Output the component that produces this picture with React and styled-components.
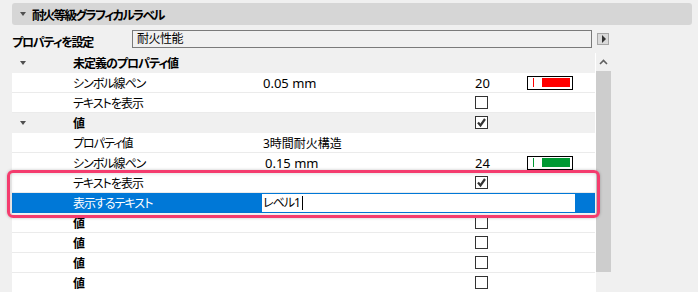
import React from 'react';
import styled, { createGlobalStyle } from 'styled-components';

const GlobalStyle = createGlobalStyle`
  html, body {
    margin: 0;
    padding: 0;
    background: #f0f0f0;
    overflow: hidden;
  }
  body {
    font-family: "Noto Sans", "Noto Sans CJK JP", sans-serif;
    font-size: 12px;
    color: #000;
    font-feature-settings: "palt";
  }
`;

const Page = styled.div`
  width: 698px;
  height: 292px;
  padding: 3px 6px 0 12px;
  box-sizing: border-box;
`;

const HeaderBar = styled.div`
  height: 22px;
  display: flex;
  align-items: center;
  background: #d6d6d6;
  border-radius: 3px;
  padding-left: 8px;
  gap: 6px;
  font-weight: bold;
  font-size: 12.5px;
  letter-spacing: -1.7px;
`;

const Caret = styled.span`
  width: 0;
  height: 0;
  border-left: 3px solid transparent;
  border-right: 3px solid transparent;
  border-top: 4px solid #505050;
  flex: none;
`;

const PropRow = styled.div`
  height: 28px;
  display: flex;
  align-items: flex-start;
`;

const PropLabel = styled.div`
  width: 120px;
  padding-top: 8px;
  font-weight: bold;
  letter-spacing: -1.2px;
`;

const PropInput = styled.div`
  margin-top: 5px;
  width: 460px;
  height: 18px;
  box-sizing: border-box;
  border: 1px solid #7a7a7a;
  background: #f0f0f0;
  padding-left: 4px;
  line-height: 16px;
  letter-spacing: -0.5px;
`;

const MenuButton = styled.div`
  margin: 8px 0 0 5px;
  width: 12px;
  height: 12px;
  box-sizing: border-box;
  border: 1px solid #a6a6a6;
  background: #dadada;
  display: flex;
  align-items: center;
  justify-content: center;
  &::after {
    content: '';
    border-top: 4px solid transparent;
    border-bottom: 4px solid transparent;
    border-left: 4px solid #333;
    margin-left: 1px;
  }
`;

const TableArea = styled.div`
  display: flex;
  height: 239px;
`;

const Table = styled.div`
  position: relative;
  width: 583px;
`;

const Row = styled.div`
  height: 20px;
  box-sizing: border-box;
  display: grid;
  grid-template-columns: 61px 190px 212px 52px 1fr;
  align-items: center;
  background: ${p => (p.$selected ? '#0078d7' : p.$group ? '#f0f0f0' : '#fff')};
  color: ${p => (p.$selected ? '#fff' : '#000')};
  border-bottom: 1px solid ${p => (p.$group || p.$selected ? 'transparent' : '#ebebeb')};
`;

const CaretCell = styled.div`
  padding-left: 8px;
  display: flex;
  align-items: center;
`;

const Label = styled.div`
  font-weight: ${p => (p.$bold ? 'bold' : 'normal')};
  letter-spacing: -1px;
  white-space: nowrap;
`;

const Value = styled.div`
  white-space: nowrap;
  font-size: ${p => (p.$latin ? '13px' : '12px')};
  padding-left: ${p => p.$shift || 0}px;
`;

const EditBox = styled.div`
  margin-left: -1px;
  width: 313px;
  height: 18px;
  box-sizing: border-box;
  background: #fff;
  color: #000;
  padding-left: 1px;
  line-height: 18px;
  letter-spacing: -1px;
  display: flex;
  align-items: center;
  &::after {
    content: '';
    width: 1px;
    height: 14px;
    background: #000;
    margin-left: 2px;
  }
`;

const Checkbox = styled.div`
  width: 13px;
  height: 13px;
  box-sizing: border-box;
  border: 1px solid #333;
  background: #fff;
  display: flex;
  align-items: center;
  justify-content: center;
`;

const PenNumber = styled.span`
  font-size: 13px;
`;

const Swatch = styled.div`
  width: 46px;
  height: 14px;
  box-sizing: border-box;
  border: 1px solid #000;
  background: #fff;
  display: flex;
  align-items: center;
  padding: 0 2px 0 5px;
  gap: 8px;
`;

const SwatchTick = styled.span`
  width: 1px;
  height: 9px;
  background: ${p => p.$color};
`;

const SwatchBar = styled.span`
  flex: 1;
  height: 9px;
  background: ${p => p.$color};
`;

const Highlight = styled.div`
  position: absolute;
  left: -5px;
  top: 117px;
  width: 593px;
  height: 48px;
  box-sizing: border-box;
  border: 3px solid #f43c6e;
  border-radius: 6px;
  box-shadow: 0 0 3px rgba(0, 0, 0, 0.25), inset 0 0 4px rgba(0, 0, 0, 0.18);
  pointer-events: none;
`;

const Scrollbar = styled.div`
  width: 16px;
  box-sizing: border-box;
  border-left: 1px solid #fff;
  display: flex;
  flex-direction: column;
`;

const ScrollArrow = styled.div`
  height: 18px;
  display: flex;
  align-items: center;
  justify-content: center;
`;

const ScrollThumb = styled.div`
  height: 201px;
  background: #cdcdcd;
`;

const Check = () => (
  <svg width="11" height="11" viewBox="0 0 11 11">
    <path d="M2 5.5 L4.5 8.5 L9 2" fill="none" stroke="#333" strokeWidth="2.2" />
  </svg>
);

const rows = [
  { group: true, label: '未定義のプロパティ値' },
  { label: 'シンボル線ペン', value: '0.05 mm', latin: true, pen: '20', color: '#ff0000' },
  { label: 'テキストを表示', check: false },
  { group: true, label: '値', check: true },
  { label: 'プロパティ値', value: '3時間耐火構造' },
  { label: 'シンボル線ペン', value: '0.15 mm', latin: true, shift: 2, pen: '24', color: '#009933' },
  { label: 'テキストを表示', check: true },
  { label: '表示するテキスト', edit: 'レベル1', selected: true },
  { label: '値', bold: true, check: false },
  { label: '値', bold: true, check: false },
  { label: '値', bold: true, check: false },
  { label: '値', bold: true, check: false },
];

export default function App() {
  return (
    <Page>
      <GlobalStyle />
      <HeaderBar>
        <Caret />
        耐火等級グラフィカルラベル
      </HeaderBar>
      <PropRow>
        <PropLabel>プロパティを設定</PropLabel>
        <PropInput>耐火性能</PropInput>
        <MenuButton />
      </PropRow>
      <TableArea>
        <Table>
          {rows.map((r, i) => (
            <Row key={i} $group={r.group} $selected={r.selected}>
              <CaretCell>{r.group && <Caret />}</CaretCell>
              <Label $bold={r.group || r.bold}>{r.label}</Label>
              {r.edit ? (
                <EditBox>{r.edit}</EditBox>
              ) : (
                <Value $latin={r.latin} $shift={r.shift}>{r.value}</Value>
              )}
              <div>
                {r.pen && <PenNumber>{r.pen}</PenNumber>}
                {r.check !== undefined && <Checkbox>{r.check && <Check />}</Checkbox>}
              </div>
              <div>
                {r.color && (
                  <Swatch>
                    <SwatchTick $color={r.color} />
                    <SwatchBar $color={r.color} />
                  </Swatch>
                )}
              </div>
            </Row>
          ))}
          <Highlight />
        </Table>
        <Scrollbar>
          <ScrollArrow>
            <svg width="9" height="6" viewBox="0 0 9 6">
              <path d="M1 5 L4.5 1.5 L8 5" fill="none" stroke="#606060" strokeWidth="1.6" />
            </svg>
          </ScrollArrow>
          <ScrollThumb />
        </Scrollbar>
      </TableArea>
    </Page>
  );
}
